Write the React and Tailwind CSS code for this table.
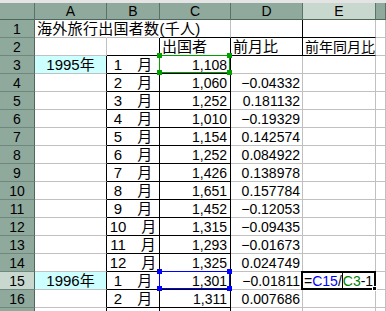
import React from "react";

const FONT = { fontFamily: '"Liberation Sans", "Noto Sans CJK JP", sans-serif' };

const months = [
  { r: 3, m: "1", v: "1,108", d: "", a: "1995年" },
  { r: 4, m: "2", v: "1,060", d: "−0.04332" },
  { r: 5, m: "3", v: "1,252", d: "0.181132" },
  { r: 6, m: "4", v: "1,010", d: "−0.19329" },
  { r: 7, m: "5", v: "1,154", d: "0.142574" },
  { r: 8, m: "6", v: "1,252", d: "0.084922" },
  { r: 9, m: "7", v: "1,426", d: "0.138978" },
  { r: 10, m: "8", v: "1,651", d: "0.157784" },
  { r: 11, m: "9", v: "1,452", d: "−0.12053" },
  { r: 12, m: "10", v: "1,315", d: "−0.09435" },
  { r: 13, m: "11", v: "1,293", d: "−0.01673" },
  { r: 14, m: "12", v: "1,325", d: "0.024749" },
  { r: 15, m: "1", v: "1,301", d: "−0.01811", a: "1996年" },
  { r: 16, m: "2", v: "1,311", d: "0.007686" },
];

// col: 1=A 2=B 3=C 4=D 5=E 6=F
const rightClass = (row, col) => {
  if (row === 1 && (col === 1 || col === 2)) return "border-r-transparent";
  if (col === 1 && row >= 3) return "border-r-black";
  if ((col === 2 || col === 3) && row >= 2) return "border-r-black";
  if (col === 4 && row <= 2) return "border-r-black";
  return "border-r-[#c0c0c0]";
};

const bottomClass = (row, col) => {
  if (row === 1 && col >= 3 && col <= 5) return "border-b-black";
  if (row === 2 && col >= 2 && col <= 5) return "border-b-black";
  if (row >= 3 && row <= 16 && (col === 2 || col === 3)) return "border-b-black";
  return "border-b-[#c0c0c0]";
};

const Corner = ({ color, pos }) => (
  <span className={`absolute w-[5px] h-[5px] ${color} ${pos}`} />
);

const RefBox = ({ border, fill }) => (
  <div className={`absolute -left-[1px] -top-[1px] right-0 bottom-0 border ${border} pointer-events-none z-20`}>
    <Corner color={fill} pos="-left-[3px] -top-[3px]" />
    <Corner color={fill} pos="-right-[3px] -top-[3px]" />
    <Corner color={fill} pos="-left-[3px] -bottom-[3px]" />
    <Corner color={fill} pos="-right-[3px] -bottom-[3px]" />
  </div>
);

const Cell = ({ row, col, children, bg = "bg-white", className = "" }) => (
  <div
    className={`relative h-[18px] border-r border-b ${rightClass(row, col)} ${bottomClass(row, col)} ${bg} flex items-center text-[14px] leading-none text-black whitespace-nowrap ${className}`}
  >
    {children}
  </div>
);

const RowHead = ({ n, active }) => (
  <div
    className={`h-[18px] border-r border-b border-r-[#4f665c] border-b-[#6f877c] flex items-center justify-center text-[14px] leading-none text-black ${
      active ? "bg-[#c9d8cf]" : "bg-[#8fa99d]"
    }`}
  >
    {n}
  </div>
);

const ColHead = ({ label, active }) => (
  <div
    className={`h-[17px] border-r border-b border-r-[#5b7267] border-b-[#4f665c] flex items-center justify-center text-[14px] leading-none text-black ${
      active ? "bg-[#c9d8cf]" : "bg-[#8fa99d]"
    }`}
  >
    {label}
  </div>
);

export default function App() {
  return (
    <div className="w-[386px] h-[311px] overflow-hidden bg-white" style={FONT}>
      <div className="h-[3px] bg-[#e4e4e4]" />
      <div className="grid grid-cols-[35px_72px_53px_71px_72px_73px_1fr]">
        <ColHead label="" />
        <ColHead label="A" />
        <ColHead label="B" />
        <ColHead label="C" />
        <ColHead label="D" />
        <ColHead label="E" active />
        <ColHead label="" />

        {/* row 1 */}
        <RowHead n="1" />
        <Cell row={1} col={1} className="pl-[2px] z-10">
          <span className="text-[15px] tracking-[0.3px]">海外旅行出国者数(千人)</span>
        </Cell>
        <Cell row={1} col={2} bg="bg-transparent" />
        <Cell row={1} col={3} bg="bg-transparent" />
        <Cell row={1} col={4} />
        <Cell row={1} col={5} />
        <Cell row={1} col={6} />

        {/* row 2 */}
        <RowHead n="2" />
        <Cell row={2} col={1} />
        <Cell row={2} col={2} />
        <Cell row={2} col={3} className="pl-[2px] text-[15px]">出国者</Cell>
        <Cell row={2} col={4} className="pl-[2px] text-[15px]">前月比</Cell>
        <Cell row={2} col={5} className="pl-[2px] text-[13.5px]">前年同月比</Cell>
        <Cell row={2} col={6} />

        {months.map((m) => (
          <React.Fragment key={m.r}>
            <RowHead n={m.r} active={m.r === 15} />
            <Cell
              row={m.r}
              col={1}
              bg={m.a ? "bg-[#ccffff]" : "bg-white"}
              className="justify-center"
            >
              {m.a ? <span className="text-[15px]">{m.a}</span> : null}
            </Cell>
            <Cell row={m.r} col={2} className="justify-center">
              <span className="text-[15px]">
                {m.m}
                {"\u3000"}月
              </span>
            </Cell>
            <Cell row={m.r} col={3} className="justify-end pr-[3px]">
              {m.v}
              {m.r === 3 && <RefBox border="border-[#00a000]" fill="bg-[#00a000]" />}
              {m.r === 15 && <RefBox border="border-[#0000ff]" fill="bg-[#0000ff]" />}
            </Cell>
            <Cell row={m.r} col={4} className="justify-end pr-[2px]">
              {m.d}
            </Cell>
            <Cell row={m.r} col={5} className={m.r === 15 ? "z-30 overflow-visible" : ""}>
              {m.r === 15 && (
                <>
                  <div className="absolute -left-[2px] -top-[1px] -right-[1px] -bottom-[1px] border-2 border-black">
                    <span className="absolute -right-[3px] -bottom-[3px] w-[5px] h-[5px] bg-black border border-white" />
                  </div>
                  <span className="relative pl-[1px] flex items-center">
                    <span>=</span>
                    <span className="text-[#0000ff]">C15</span>
                    <span>/</span>
                    <span className="inline-block w-[1px] h-[15px] bg-black" />
                    <span className="text-[#008000]">C3</span>
                    <span>-1</span>
                  </span>
                </>
              )}
            </Cell>
            <Cell row={m.r} col={6} />
          </React.Fragment>
        ))}

        {/* row 17 (cut off) */}
        <RowHead n="" />
        <Cell row={17} col={1} />
        <Cell row={17} col={2} />
        <Cell row={17} col={3} />
        <Cell row={17} col={4} />
        <Cell row={17} col={5} />
        <Cell row={17} col={6} />
      </div>
    </div>
  );
}
